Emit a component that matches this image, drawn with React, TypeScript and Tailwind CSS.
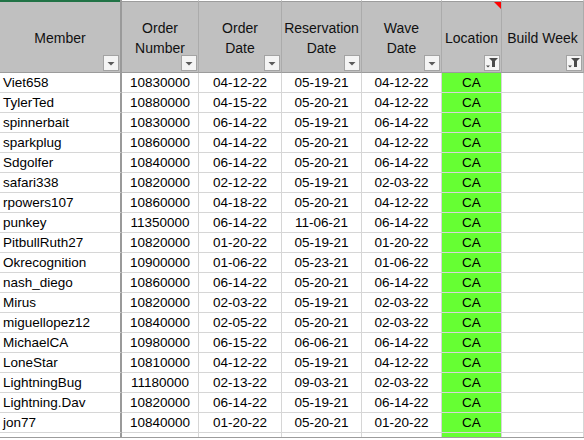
import React from 'react';

// ─── Spreadsheet snapshot: filtered member orders ─────────────────────────

const rows: [string, string, string, string, string][] = [
  ['Viet658', '10830000', '04-12-22', '05-19-21', '04-12-22'],
  ['TylerTed', '10880000', '04-15-22', '05-20-21', '04-12-22'],
  ['spinnerbait', '10830000', '06-14-22', '05-19-21', '06-14-22'],
  ['sparkplug', '10860000', '04-14-22', '05-20-21', '04-12-22'],
  ['Sdgolfer', '10840000', '06-14-22', '05-20-21', '06-14-22'],
  ['safari338', '10820000', '02-12-22', '05-19-21', '02-03-22'],
  ['rpowers107', '10860000', '04-18-22', '05-20-21', '04-12-22'],
  ['punkey', '11350000', '06-14-22', '11-06-21', '06-14-22'],
  ['PitbullRuth27', '10820000', '01-20-22', '05-19-21', '01-20-22'],
  ['Okrecognition', '10900000', '01-06-22', '05-23-21', '01-06-22'],
  ['nash_diego', '10860000', '06-14-22', '05-20-21', '06-14-22'],
  ['Mirus', '10820000', '02-03-22', '05-19-21', '02-03-22'],
  ['miguellopez12', '10840000', '02-05-22', '05-20-21', '02-03-22'],
  ['MichaelCA', '10980000', '06-15-22', '06-06-21', '06-14-22'],
  ['LoneStar', '10810000', '04-12-22', '05-19-21', '04-12-22'],
  ['LightningBug', '11180000', '02-13-22', '09-03-21', '02-03-22'],
  ['Lightning.Dav', '10820000', '06-14-22', '05-19-21', '06-14-22'],
  ['jon77', '10840000', '01-20-22', '05-20-21', '01-20-22'],
];

const grid = 'grid grid-cols-[122px_77px_83px_80px_80px_60px_82px]';

function DropButton({ filtered }: { filtered?: boolean }) {
  return (
    <div className="absolute right-[1px] bottom-[1px] w-[16px] h-[16px] bg-[#f4f4f4] border border-[#a3a3a3] flex items-center justify-center">
      {filtered ? (
        <svg width="14" height="14" viewBox="0 0 14 14">
          <path d="M4 2h9l-3 3v6H7V5z" fill="#4a4a4a" />
          <path d="M1 9.5h4l-2 2z" fill="#4a4a4a" />
        </svg>
      ) : (
        <svg width="14" height="14" viewBox="0 0 14 14">
          <path d="M3.5 6h7l-3.5 3.5z" fill="#5a5a5a" />
        </svg>
      )}
    </div>
  );
}

function HeadCell({
  children,
  filtered,
  first,
  note,
}: {
  children: React.ReactNode;
  filtered?: boolean;
  first?: boolean;
  note?: boolean;
}) {
  return (
    <div
      className={
        'relative h-[71px] bg-[#c0c0c0] border-b border-[#9c9c9c] flex items-center justify-center text-center text-[14px] leading-[20px] text-[#111] pt-[1px] ' +
        (first ? 'border-r-2 border-r-[#9a9a9a]' : 'border-r border-r-[#ababab]')
      }
    >
      <div>{children}</div>
      {note && (
        <div className="absolute right-0 top-0 w-0 h-0 border-t-[7px] border-t-[#ff0000] border-l-[7px] border-l-transparent" />
      )}
      <DropButton filtered={filtered} />
    </div>
  );
}

function Cell({
  children,
  first,
  green,
}: {
  children?: React.ReactNode;
  first?: boolean;
  green?: boolean;
}) {
  return (
    <div
      className={
        'h-[20px] border-b border-[#d6d6d6] flex items-center pt-[1px] text-[13.5px] text-black ' +
        (first
          ? 'pl-[3px] border-r-2 border-r-[#9a9a9a]'
          : 'justify-center border-r border-r-[#d6d6d6]') +
        (green ? ' bg-[#66ff33]' : ' bg-white')
      }
    >
      {children}
    </div>
  );
}

export default function App() {
  return (
    <div
      className="w-[584px] h-[440px] overflow-hidden bg-white"
      style={{ fontFamily: '"Liberation Sans", Arial, sans-serif' }}
    >
      {/* ── Top edge ─────────────────────────────────────────────── */}
      <div className={grid + ' h-[2px]'}>
        <div className="bg-[#217346] border-r-2 border-r-[#9a9a9a]" />
        {[0, 1, 2, 3, 4, 5].map((i) => (
          <div key={i} className="bg-white border-r border-r-[#c8c8c8] border-b border-b-[#9c9c9c]" />
        ))}
      </div>

      {/* ── Header ───────────────────────────────────────────────── */}
      <div className={grid}>
        <HeadCell first>Member</HeadCell>
        <HeadCell>
          Order
          <br />
          Number
        </HeadCell>
        <HeadCell>
          Order
          <br />
          Date
        </HeadCell>
        <HeadCell>
          Reservation
          <br />
          Date
        </HeadCell>
        <HeadCell>
          Wave
          <br />
          Date
        </HeadCell>
        <HeadCell filtered note>
          Location
        </HeadCell>
        <HeadCell filtered>Build Week</HeadCell>
      </div>

      {/* ── Body ─────────────────────────────────────────────────── */}
      <div className={grid}>
        {rows.map(([member, order, orderDate, resDate, waveDate]) => (
          <React.Fragment key={member}>
            <Cell first>{member}</Cell>
            <Cell>{order}</Cell>
            <Cell>{orderDate}</Cell>
            <Cell>{resDate}</Cell>
            <Cell>{waveDate}</Cell>
            <Cell green>CA</Cell>
            <Cell />
          </React.Fragment>
        ))}
      </div>

      {/* ── Bottom edge ──────────────────────────────────────────── */}
      <div className={grid + ' h-[4px]'}>
        <div className="border-r-2 border-r-[#9a9a9a]" />
        {[0, 1, 2, 3].map((i) => (
          <div key={i} className="border-r border-r-[#d6d6d6]" />
        ))}
        <div className="bg-[#66ff33] border-r border-r-[#d6d6d6]" />
        <div className="border-r border-r-[#d6d6d6]" />
      </div>
      <div className="h-[2px] border-t border-[#9c9c9c]" />
    </div>
  );
}
